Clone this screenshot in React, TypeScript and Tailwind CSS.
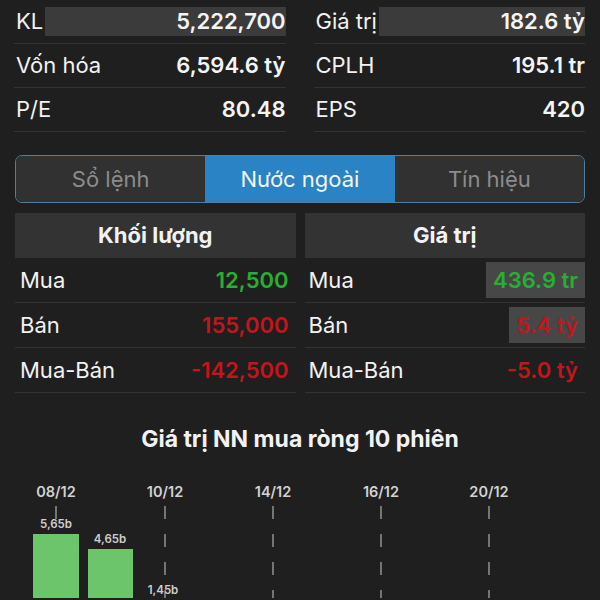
import React from 'react';

type Stat = { label: string; value: string; boxed?: boolean };

const leftStats: Stat[] = [
  { label: 'KL', value: '5,222,700', boxed: true },
  { label: 'Vốn hóa', value: '6,594.6 tỷ' },
  { label: 'P/E', value: '80.48' },
];

const rightStats: Stat[] = [
  { label: 'Giá trị', value: '182.6 tỷ', boxed: true },
  { label: 'CPLH', value: '195.1 tr' },
  { label: 'EPS', value: '420' },
];

type FlowRow = { label: string; value: string; color: string; boxed?: boolean };

const volumeRows: FlowRow[] = [
  { label: 'Mua', value: '12,500', color: 'text-[#27b02f]' },
  { label: 'Bán', value: '155,000', color: 'text-[#c3151b]' },
  { label: 'Mua-Bán', value: '-142,500', color: 'text-[#c3151b]' },
];

const valueRows: FlowRow[] = [
  { label: 'Mua', value: '436.9 tr', color: 'text-[#27b02f]', boxed: true },
  { label: 'Bán', value: '5.4 tỷ', color: 'text-[#c3151b]', boxed: true },
  { label: 'Mua-Bán', value: '-5.0 tỷ', color: 'text-[#c3151b]' },
];

const StatColumn = ({ rows }: { rows: Stat[] }) => (
  <div className="flex-1 flex flex-col">
    {rows.map((r) => (
      <div key={r.label} className="h-[44px] flex items-center border-b border-[#333333]">
        <span className="text-[22px] text-[#f2f2f2] pl-[2px] pr-[2px] whitespace-nowrap">{r.label}</span>
        {r.boxed ? (
          <div className="flex-1 h-[29px] bg-[#3b3b3b] flex items-center justify-end">
            <span className="text-[22px] font-semibold text-[#f4f4f4]">{r.value}</span>
          </div>
        ) : (
          <span className="flex-1 text-right text-[22px] font-semibold text-[#f4f4f4]">{r.value}</span>
        )}
      </div>
    ))}
  </div>
);

const FlowTable = ({ title, rows, labelPad }: { title: string; rows: FlowRow[]; labelPad: string }) => (
  <div className="flex-1 flex flex-col">
    <div className="h-[45px] bg-[#333333] flex items-center justify-center text-[22px] font-bold text-[#f2f2f2]">
      {title}
    </div>
    {rows.map((r) => (
      <div key={r.label} className={`h-[45px] flex items-center justify-between border-b border-[#333333] ${labelPad}`}>
        <span className="text-[22px] text-[#f2f2f2]">{r.label}</span>
        <span
          className={`h-[36px] flex items-center px-[7px] text-[22px] font-semibold ${r.color} ${r.boxed ? 'bg-[#474747]' : ''}`}
        >
          {r.value}
        </span>
      </div>
    ))}
  </div>
);

const dates = [
  { x: 56, label: '08/12' },
  { x: 165, label: '10/12' },
  { x: 273, label: '14/12' },
  { x: 381, label: '16/12' },
  { x: 489, label: '20/12' },
];

// chart: svg y = page y - 455
const NetChart = () => (
  <svg width="600" height="145" viewBox="0 0 600 145" className="block">
    {dates.map((d) => (
      <g key={d.label}>
        <text x={d.x} y={44} textAnchor="middle" fontSize="14.5" fontWeight="600" fill="#d2d2d2">
          {d.label}
        </text>
        <line x1={d.x} y1={53} x2={d.x} y2={145} stroke="#8a8a8a" strokeWidth="1.6" strokeDasharray="13 15" />
      </g>
    ))}
    <rect x="33" y="81" width="46" height="70" fill="#6cc56b" />
    <rect x="88" y="96" width="45" height="55" fill="#6cc56b" />
    <text x="56" y="75" textAnchor="middle" fontSize="11.5" fontWeight="600" fill="#cfcfcf">5,65b</text>
    <text x="110" y="90" textAnchor="middle" fontSize="11.5" fontWeight="600" fill="#cfcfcf">4,65b</text>
    <text x="163" y="141" textAnchor="middle" fontSize="11.5" fontWeight="600" fill="#cfcfcf">1,45b</text>
  </svg>
);

export default function App() {
  return (
    <div className="w-[600px] h-[600px] overflow-hidden bg-[#1f1f1f] font-['Inter',sans-serif]">
      {/* Stats */}
      <div className="flex pl-[14px] pr-[15px] gap-[28px]">
        <StatColumn rows={leftStats} />
        <StatColumn rows={rightStats} />
      </div>

      {/* Tabs */}
      <div className="mt-[23px] mx-[15px] h-[48px] grid grid-cols-3 rounded-[7px] border-[1.5px] border-[#4d7f9e] overflow-hidden">
        <div className="bg-[#313131] flex items-center justify-center text-[22px] text-[#8c8c8c]">Sổ lệnh</div>
        <div className="bg-[#2a83c4] flex items-center justify-center text-[22px] text-[#f4f4f4]">Nước ngoài</div>
        <div className="bg-[#313131] flex items-center justify-center text-[22px] text-[#8c8c8c]">Tín hiệu</div>
      </div>

      {/* Foreign flow tables */}
      <div className="mt-[10px] flex px-[15px] gap-[9px]">
        <FlowTable title="Khối lượng" rows={volumeRows} labelPad="pl-[5px]" />
        <FlowTable title="Giá trị" rows={valueRows} labelPad="pl-[4px]" />
      </div>

      {/* Chart */}
      <div className="mt-[32px] h-[28px] flex items-center justify-center text-[23px] font-bold text-[#f2f2f2]">
        Giá trị NN mua ròng 10 phiên
      </div>
      <NetChart />
    </div>
  );
}
